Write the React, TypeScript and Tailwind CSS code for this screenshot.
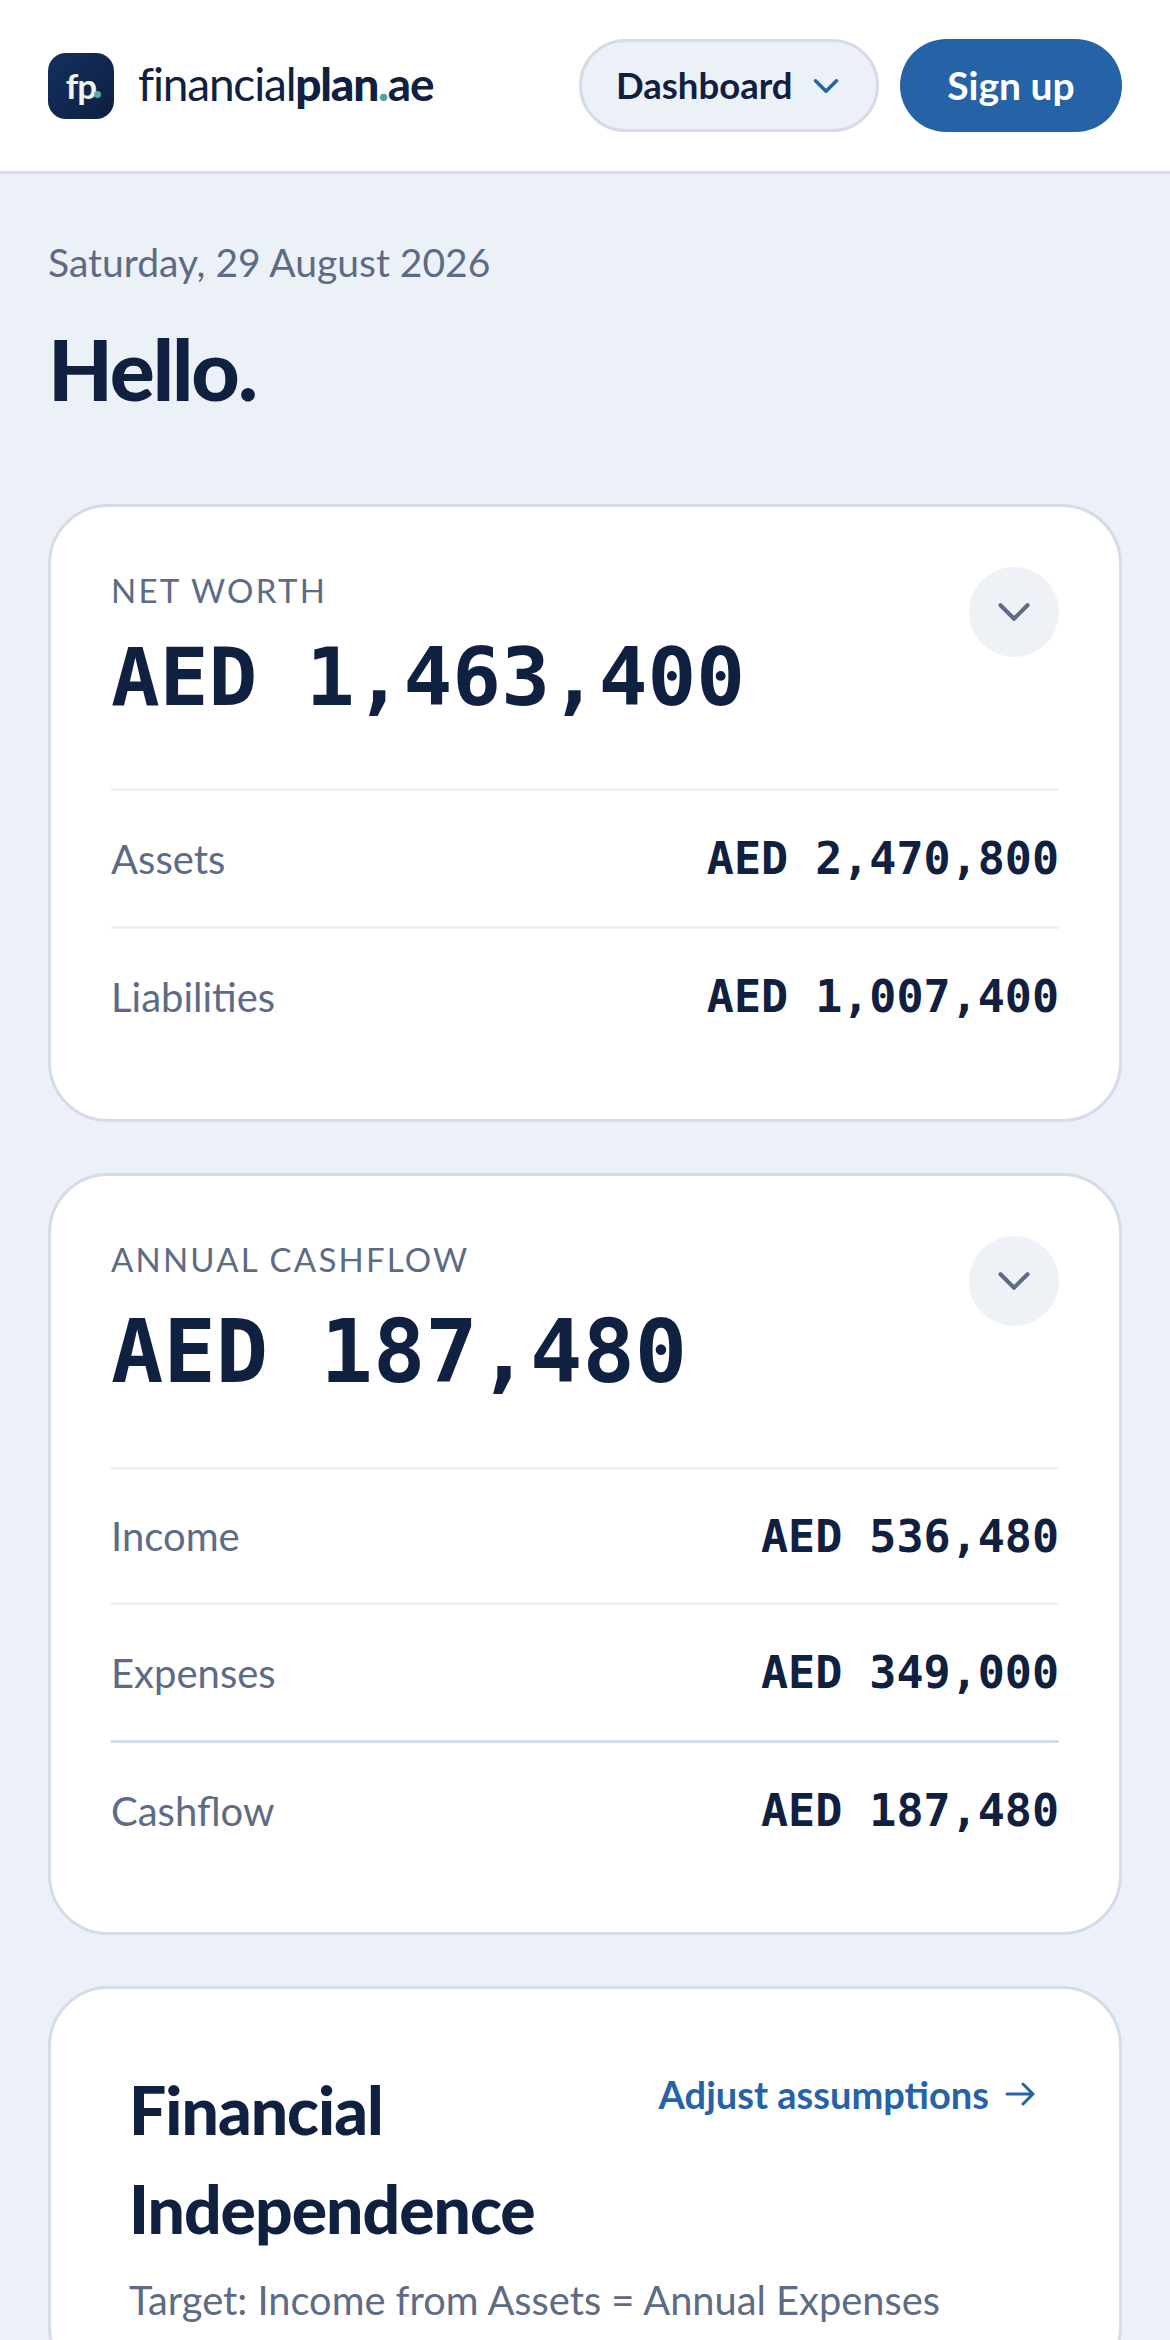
import { ChevronDown } from "lucide-react"

const sans = "font-['Lato',sans-serif]"
const mono = "font-['DejaVu_Sans_Mono',monospace]"

type RowData = { label: string; value: string; strong?: boolean; short?: boolean }

function Row({ label, value, strong, short }: RowData) {
  return (
    <div className={`flex items-center justify-between border-t-[3px] ${short ? "h-[135px]" : "h-[138px]"} ${strong ? "border-[#d5dcea]" : "border-[#eef1f6]"}`}>
      <span className="text-[40px] leading-none text-[#5d6b85]">{label}</span>
      <span className={`${mono} text-[45px] leading-none font-bold text-[#0f2040]`}>{value}</span>
    </div>
  )
}

function StatCard({ title, amount, size, bottom, tracking, rows }: { title: string; amount: string; size: string; bottom: string; tracking: string; rows: RowData[] }) {
  return (
    <section className={`rounded-[60px] border-[3px] border-[#d5dce8] bg-white px-[60px] pt-[60px] ${bottom}`}>
      <div className="flex items-start justify-between">
        <div>
          <div className={`mt-[3px] text-[33px] leading-[40px] text-[#5d6b85] ${tracking}`}>{title}</div>
          <div className={`${mono} ${size} font-bold text-[#0f2040]`}>{amount}</div>
        </div>
        <button className="flex h-[90px] w-[90px] items-center justify-center rounded-full bg-[#eef1f6] text-[#5d6b85]">
          <ChevronDown size={54} strokeWidth={1.8} />
        </button>
      </div>
      <div className="mt-[63px]">
        {rows.map((r) => (
          <Row key={r.label} {...r} />
        ))}
      </div>
    </section>
  )
}

export default function App() {
  return (
    <div className={`${sans} h-[2340px] overflow-hidden bg-[#ecf1f8] text-[#0f2040]`}>
      <header className="flex h-[174px] items-center justify-between border-b-[3px] border-[#d5dce8] bg-white pr-[48px] pl-[48px]">
        <div className="flex items-center gap-[24px]">
          <div className="relative flex h-[66px] w-[66px] items-center justify-center rounded-[18px] bg-gradient-to-br from-[#14305f] to-[#0d1f3f]">
            <span className="text-[35px] leading-none font-bold tracking-[-1px] text-[#f5f3ee]">fp</span>
            <span className="absolute right-[13px] bottom-[21px] h-[7px] w-[7px] rounded-full bg-[#4fb3a3]" />
          </div>
          <div className="mb-[4px] text-[46px] leading-none tracking-[-1.2px] text-[#0f2040]">
            <span className="font-normal">financial</span>
            <span className="font-black">plan</span>
            <span className="font-black text-[#4aa89a]">.</span>
            <span className="font-bold">ae</span>
          </div>
        </div>
        <div className="flex items-center gap-[21px]">
          <button className="flex h-[93px] w-[300px] items-center gap-[12px] rounded-full border-[3px] border-[#d5dce8] bg-[#ecf1f8] pl-[34px] text-[36.5px] font-bold">
            Dashboard
            <ChevronDown size={42} strokeWidth={2} className="text-[#2563a6]" />
          </button>
          <button className="h-[93px] w-[222px] rounded-full bg-[#2563a6] text-[39px] font-bold text-white">Sign up</button>
        </div>
      </header>

      <main className="px-[48px]">
        <p className="mt-[64px] text-[39px] leading-[48px] text-[#5d6b85]">Saturday, 29 August 2026</p>
        <h1 className="mt-[41px] text-[84px] leading-[84px] font-black tracking-[-2px]">Hello.</h1>

        <div className="mt-[93px] flex flex-col gap-[51px]">
          <StatCard
            title="NET WORTH"
            amount="AED 1,463,400"
            size="text-[81px] leading-[96px] mt-[19px]"
            bottom="pb-[55px]"
            tracking="tracking-[2.3px]"
            rows={[
              { label: "Assets", value: "AED 2,470,800" },
              { label: "Liabilities", value: "AED 1,007,400" },
            ]}
          />
          <StatCard
            title="ANNUAL CASHFLOW"
            amount="AED 187,480"
            size="text-[87px] leading-[104px] mt-[21px]"
            bottom="pb-[54px]"
            tracking="tracking-[2.2px]"
            rows={[
              { label: "Income", value: "AED 536,480", short: true },
              { label: "Expenses", value: "AED 349,000" },
              { label: "Cashflow", value: "AED 187,480", strong: true },
            ]}
          />
          <section className="rounded-[60px] border-[3px] border-[#d5dce8] bg-white pt-[71px] pr-[84px] pb-[60px] pl-[78px]">
            <div className="flex items-start justify-between">
              <h2 className="w-[420px] text-[66px] leading-[99px] font-black tracking-[-1px]">Financial Independence</h2>
              <a className="mt-[10px] flex items-center gap-[16px] text-[38px] leading-[48px] font-bold text-[#2563a6]">
                Adjust assumptions
                <svg width="30" height="24" viewBox="0 0 30 24" fill="none" stroke="currentColor" strokeWidth="3" strokeLinecap="round" strokeLinejoin="round">
                  <path d="M2 12H28M18 2l10 10-10 10" />
                </svg>
              </a>
            </div>
            <p className="mt-[18px] text-[39.8px] leading-[48px] text-[#5d6b85]">Target: Income from Assets = Annual Expenses</p>
          </section>
        </div>
      </main>
    </div>
  )
}
